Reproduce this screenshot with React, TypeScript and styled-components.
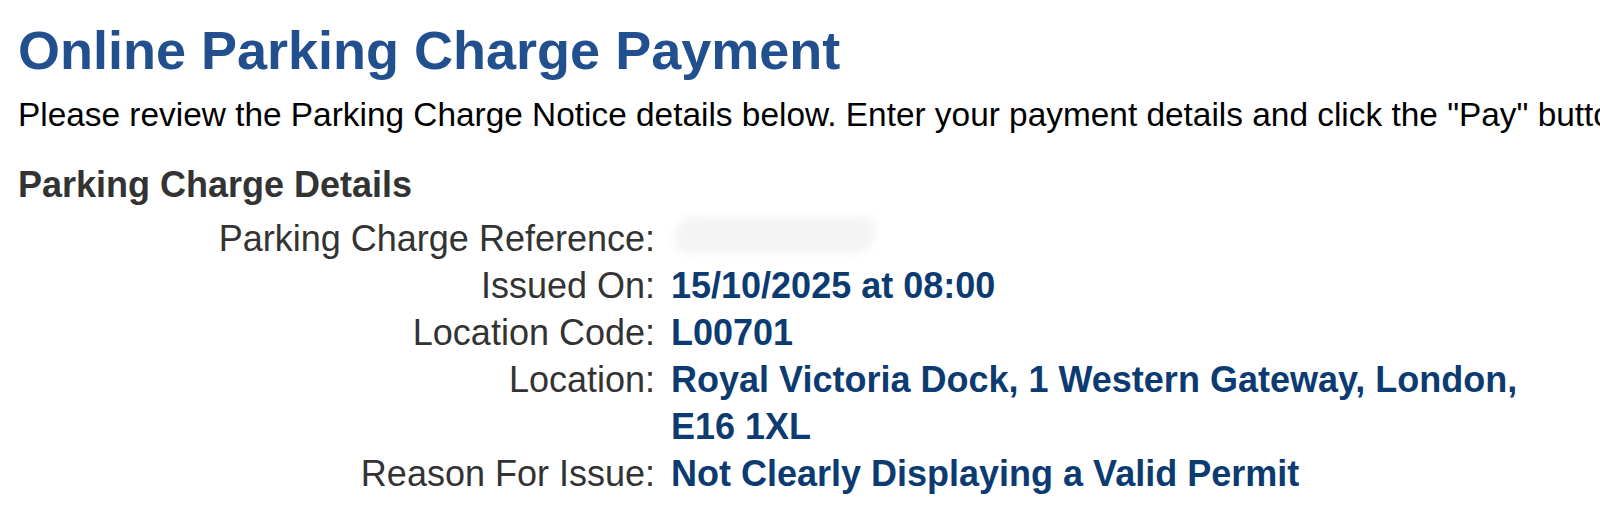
import React from "react";
import styled, { createGlobalStyle } from "styled-components";

const Global = createGlobalStyle`
  html, body { margin: 0; padding: 0; background: #ffffff; }
  body { font-family: "Liberation Sans", Arial, Helvetica, sans-serif; overflow: hidden; }
`;

const Page = styled.div`
  width: 1600px;
  height: 514px;
  overflow: hidden;
  padding: 20px 0 0 18px;
  box-sizing: border-box;
  white-space: nowrap;
`;

const Title = styled.h1`
  margin: 0;
  font-size: 54px;
  line-height: 60px;
  font-weight: 700;
  color: #22508f;
`;

const Intro = styled.p`
  margin: 15px 0 0 0;
  font-size: 33.4px;
  line-height: 40px;
  color: #000000;
`;

const SectionHeading = styled.h2`
  margin: 30px 0 0 0;
  font-size: 36px;
  line-height: 40px;
  font-weight: 700;
  color: #333333;
`;

const Details = styled.div`
  display: grid;
  grid-template-columns: 637px 880px;
  column-gap: 16px;
  row-gap: 0;
  margin-top: 10px;
`;

const Label = styled.div`
  text-align: right;
  font-size: 36px;
  line-height: 47px;
  color: #333333;
`;

const Value = styled.div`
  font-size: 36px;
  line-height: 47px;
  font-weight: 700;
  color: #0c3b72;
  white-space: normal;
  position: relative;
`;

const Redacted = styled.span`
  position: absolute;
  left: 4px;
  top: 2px;
  width: 200px;
  height: 36px;
  border-radius: 18px 6px 20px 10px;
  background: #f4f4f4;
  filter: blur(4px);
`;

const rows: { label: string; value: string }[] = [
  { label: "Issued On:", value: "15/10/2025 at 08:00" },
  { label: "Location Code:", value: "L00701" },
  { label: "Location:", value: "Royal Victoria Dock, 1 Western Gateway, London, E16 1XL" },
  { label: "Reason For Issue:", value: "Not Clearly Displaying a Valid Permit" },
];

export default function App() {
  return (
    <>
      <Global />
      <Page>
        <Title>Online Parking Charge Payment</Title>
        <Intro>
          Please review the Parking Charge Notice details below. Enter your payment details and click the "Pay" button to complete your payment.
        </Intro>
        <SectionHeading>Parking Charge Details</SectionHeading>
        <Details>
          <Label>Parking Charge Reference:</Label>
          <Value>
            <Redacted />
            &nbsp;
          </Value>
          {rows.map((r) => (
            <React.Fragment key={r.label}>
              <Label>{r.label}</Label>
              <Value>{r.value}</Value>
            </React.Fragment>
          ))}
        </Details>
      </Page>
    </>
  );
}
